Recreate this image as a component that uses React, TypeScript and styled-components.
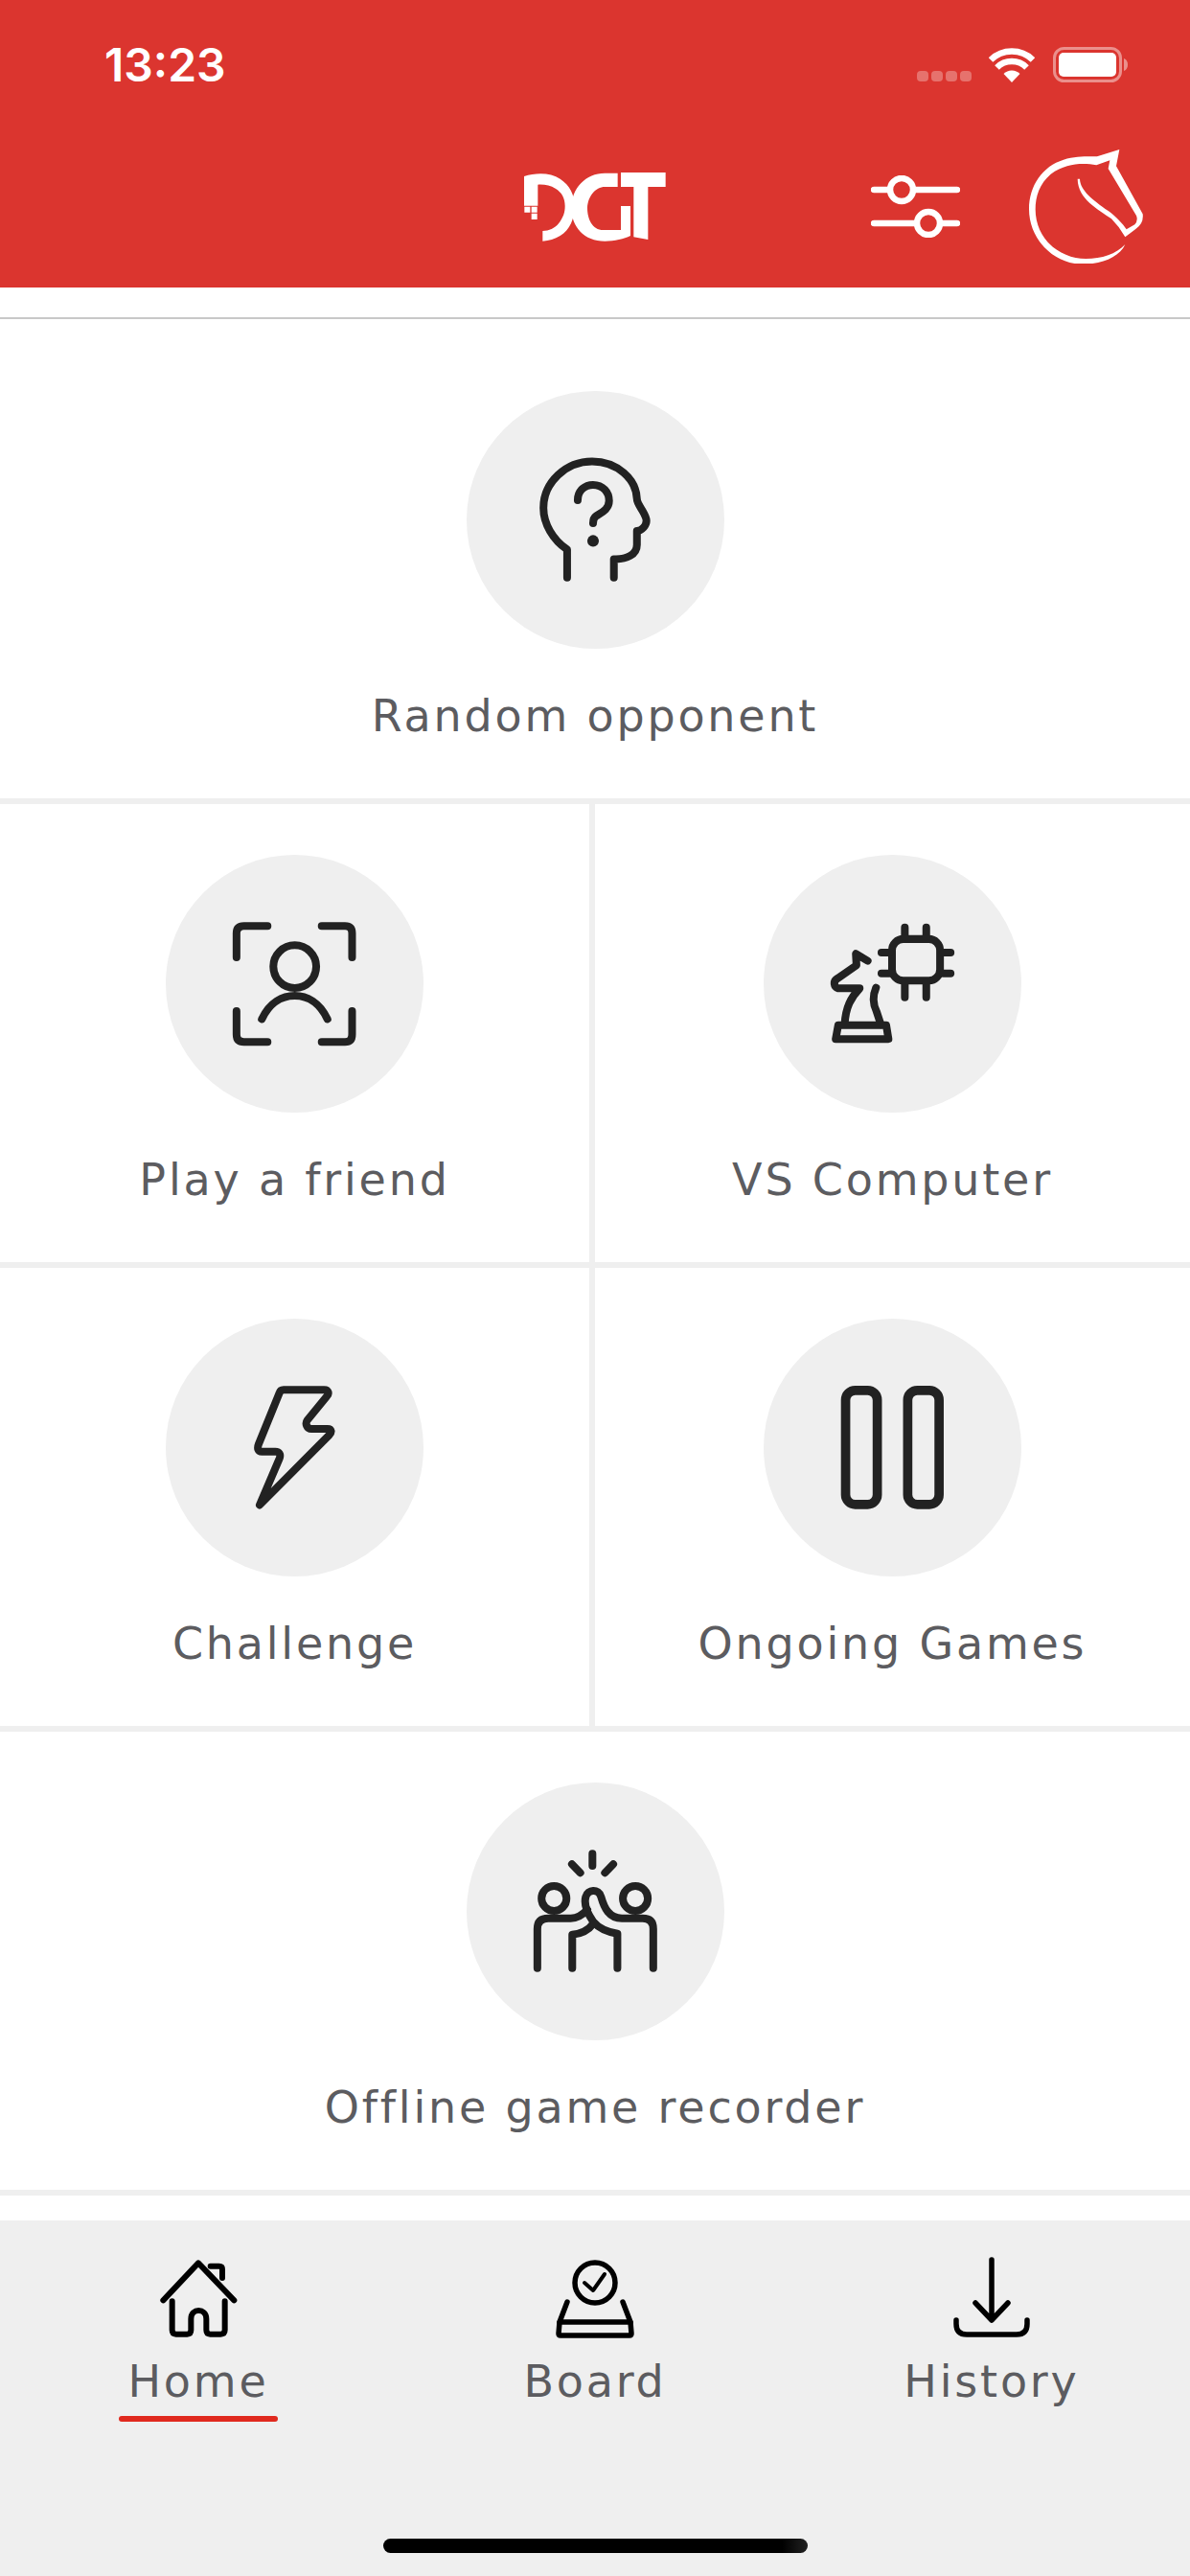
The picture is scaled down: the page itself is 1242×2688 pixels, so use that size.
import React from "react";
import styled, { createGlobalStyle } from "styled-components";

const Global = createGlobalStyle`
  html, body { margin: 0; padding: 0; background: #fff; }
  * { box-sizing: border-box; }
`;

const Page = styled.div`
  width: 1242px;
  height: 2688px;
  display: flex;
  flex-direction: column;
  background: #fff;
  overflow: hidden;
  font-family: Inter, "Liberation Sans", sans-serif;
`;

const Header = styled.header`
  height: 300px;
  flex: none;
  background: #db352f;
  display: flex;
  flex-direction: column;
`;

const StatusBar = styled.div`
  height: 156px;
  display: flex;
  justify-content: space-between;
  align-items: flex-start;
  padding: 49px 64px 0 109px;
`;

const Time = styled.span`
  color: #fff;
  font-size: 48px;
  font-weight: 600;
  line-height: 38px;
  letter-spacing: 0;
`;

const StatusIcons = styled.div`
  display: flex;
  align-items: flex-end;
`;

const SignalDots = styled.div`
  display: flex;
  gap: 3px;
  margin: 0 18px 1px 0;
`;

const SignalDot = styled.span`
  width: 12px;
  height: 11px;
  border-radius: 4px;
  background: rgba(255, 255, 255, 0.3);
`;

const Toolbar = styled.div`
  height: 119px;
  display: grid;
  grid-template-columns: 1fr auto 1fr;
  align-items: center;
  padding-right: 49px;
`;

const ToolbarEnd = styled.div`
  grid-column: 3;
  display: flex;
  justify-content: flex-end;
  align-items: center;
  gap: 72px;
`;

const LogoWrap = styled.div`
  grid-column: 2;
  display: flex;
  width: 148px;
  margin-left: 49px;
`;

const TopGap = styled.div`
  height: 31px;
  flex: none;
`;

const HeadLine = styled.div`
  height: 2px;
  flex: none;
  background: #c8c8c8;
`;

const Row = styled.div<{ $lead?: boolean }>`
  height: ${(p) => (p.$lead ? 506 : 484)}px;
  flex: none;
  border-bottom: 6px solid #efefef;
  display: grid;
  grid-template-columns: 1fr;
`;

const SplitRow = styled(Row)`
  grid-template-columns: 621px 621px;
`;

const Cell = styled.div<{ $lead?: boolean; $divided?: boolean }>`
  display: flex;
  flex-direction: column;
  align-items: center;
  padding-top: ${(p) => (p.$lead ? 75 : 53)}px;
  border-right: ${(p) => (p.$divided ? "6px solid #efefef" : "0")};
`;

const Circle = styled.div`
  width: 269px;
  height: 269px;
  flex: none;
  border-radius: 50%;
  background: #efefef;
  display: flex;
`;

const CellLabel = styled.div`
  margin-top: 42px;
  font-family: "DejaVu Sans", Inter, sans-serif;
  font-weight: 400;
  font-size: 46px;
  line-height: 56px;
  letter-spacing: 2.8px;
  color: #5c5c60;
  white-space: nowrap;
`;

const Filler = styled.div`
  flex: 1;
`;

const BottomNav = styled.nav`
  height: 371px;
  flex: none;
  background: #efefef;
  display: flex;
  flex-direction: column;
  align-items: center;
`;

const Tabs = styled.div`
  width: 100%;
  height: 332px;
  display: grid;
  grid-template-columns: repeat(3, 414px);
  padding-top: 36px;
`;

const Tab = styled.div`
  display: flex;
  flex-direction: column;
  align-items: center;
`;

const TabLabel = styled.div`
  margin-top: 14px;
  font-family: "DejaVu Sans", Inter, sans-serif;
  font-size: 46px;
  line-height: 56px;
  letter-spacing: 2.8px;
  color: #5c5c60;
`;

const TabMark = styled.div`
  width: 166px;
  height: 6px;
  margin-top: 8px;
  border-radius: 3px;
  background: #e0291e;
`;

const HomeBar = styled.div`
  width: 443px;
  height: 15px;
  border-radius: 8px;
  background: linear-gradient(90deg, #000 0%, #000 94%, #222 100%);
`;

const Sv = styled.svg`
  display: block;
  flex: none;
`;

const IconSvg: React.FC<{ vb: string; children: React.ReactNode; sw?: number }> = ({ vb, children, sw = 24 }) => (
  <Sv
    width={269}
    height={269}
    viewBox={vb}
    fill="none"
    stroke="#222"
    strokeWidth={sw}
    strokeLinecap="round"
    strokeLinejoin="round"
  >
    {children}
  </Sv>
);

const HeadIcon = () => (
  <IconSvg vb="20 25 805 805">
    <path d="M334 608V520C290 490 260 440 260 390C260 310 330 245 412 245C490 245 550 300 552 362C552 380 575 400 581 425C585 445 565 462 552 462V505C552 535 520 552 480 550V608" />
    <path d="M367 366C367 335 390 318 415 318C445 318 465 340 465 368C465 395 440 405 425 415C415 422 415 430 415 438" />
    <circle cx="415" cy="493" r="18" fill="#222" stroke="none" />
  </IconSvg>
);

const FriendIcon = () => (
  <IconSvg vb="10 5 805 805">
    <path d="M231 325V250Q231 227 254 227H328" />
    <path d="M497 227H570Q592 227 592 250V325" />
    <path d="M231 493V565Q231 589 254 589H328" />
    <path d="M497 589H570Q592 589 592 565V493" />
    <circle cx="413" cy="354" r="67" />
    <path d="M310 518C335 465 375 445 413 445C450 445 490 465 515 518" />
  </IconSvg>
);

const ComputerIcon = () => (
  <IconSvg vb="22 5 805 805">
    <rect x="423" y="268" width="150" height="130" rx="35" />
    <path d="M463 232V260M530 232V260M463 405V450M530 405V450M390 310H415M390 375H415M582 310H606M582 375H606" />
    <path d="M347 336L310 314L312 350L250 393C240 400 240 418 255 422L322 422C295 450 278 480 275 535" />
    <path d="M373 420C360 450 365 475 375 495L388 535" />
    <path d="M255 537H405L412 580H247Z" />
  </IconSvg>
);

const BoltIcon = () => (
  <IconSvg vb="10 18 805 805">
    <path d="M378 240H505C518 240 522 252 512 262L452 335C445 345 450 362 465 362H515C528 362 530 372 520 382L303 600L365 455C370 442 365 433 352 433H310C298 433 295 423 300 410L365 250C367 243 370 240 378 240Z" />
  </IconSvg>
);

const PauseIcon = () => (
  <IconSvg vb="22 18 805 805" sw={29}>
    <rect x="278" y="242" width="99" height="356" rx="30" />
    <rect x="472" y="242" width="98" height="356" rx="30" />
  </IconSvg>
);

const HighFiveIcon = () => (
  <IconSvg vb="20 28 805 805">
    <path d="M413 250V288M349 283L375 310M478 283L452 310" />
    <circle cx="293" cy="390" r="39" />
    <circle cx="547" cy="390" r="39" />
    <path d="M241 608V485Q241 452 275 452H345C365 452 382 442 397 425" />
    <path d="M350 608V503C378 500 400 490 416 468" />
    <path d="M491 608V500C460 495 430 480 415 462C400 440 385 410 392 385C398 362 432 358 440 385C450 420 465 452 505 452H570Q603 452 603 485V608" />
  </IconSvg>
);

const TabSvg: React.FC<{ vb?: string; sw?: number; children: React.ReactNode }> = ({ vb = "0 0 100 90", sw = 5.5, children }) => (
  <Sv width={100} height={90} viewBox={vb} fill="none" stroke="#000" strokeWidth={sw} strokeLinecap="round" strokeLinejoin="round">
    {children}
  </Sv>
);

const HomeIcon = () => (
  <TabSvg vb="170 40 300 270" sw={18}>
    <path d="M210 182L320 65L432 182" />
    <path d="M358 75H385Q395 75 395 85V112" />
    <path d="M238 185V275Q238 288 250 288H285Q297 288 297 275V240C297 205 345 205 345 240V275Q345 288 357 288H390Q403 288 403 275V185" />
  </TabSvg>
);

const BoardIcon = () => (
  <TabSvg>
    <circle cx="50" cy="29" r="21" />
    <path d="M39 29L48 37L60 20" strokeWidth={4} />
    <path d="M21 49L13 70M79 49L87 70" />
    <path d="M13 70H87L88 82Q88 84 86 84H14Q12 84 12 82Z" />
  </TabSvg>
);

const HistoryIcon = () => (
  <TabSvg>
    <path d="M50 5V68M33 50L50 68L67 50" />
    <path d="M13 68V72Q13 83 24 83H76Q87 83 87 72V68" />
  </TabSvg>
);

const Dgt = () => (
  <Sv width={148} height={72} viewBox="82 60 444 216" fill="#fff">
    <path d="M82 72C120 60 165 60 195 80C225 100 240 130 240 165C240 205 225 240 195 258C178 268 160 274 140 275V243C160 243 178 235 190 220C205 200 210 185 210 165C210 140 200 122 180 110C165 100 145 97 125 98V164H82Z" />
    <path d="M375 62V105H335C305 105 282 135 280 170C280 205 295 240 330 240H385V165H415V258C395 268 365 275 335 275C270 275 230 230 230 170C230 110 275 62 335 62Z" />
    <path d="M385 60H525V105H470V270L425 262V105H385Z" />
    <path d="M83 167H101V185H83ZM105 167H123V185H105ZM105 188H123V207H105Z" />
  </Sv>
);

const Sliders = () => (
  <Sv width={93} height={65} viewBox="0 0 93 65" fill="none" stroke="#fff" strokeWidth={6.5} strokeLinecap="round">
    <path d="M3 15H17M47 15H90M3 50H45M75 50H90" />
    <circle cx="32" cy="15" r="12" />
    <circle cx="60" cy="50" r="12" />
  </Sv>
);

const Horse = () => (
  <Sv width={119} height={119} viewBox="72 48 357 357" fill="#fff">
    <path d="M355 48L345 100L428 250Q432 280 405 298L373 322Q355 290 330 265C290 235 225 205 224 140L231 140C232 175 270 205 320 240C345 258 365 280 377 298L403 283Q414 270 408 255L320 108L325 82L283 97C240 90 190 90 140 125C105 155 92 195 92 235C92 330 170 390 250 390C300 390 345 375 373 345C355 385 300 407 240 407C150 407 72 330 72 235C72 160 115 100 180 80C220 68 260 70 285 70Z" />
  </Sv>
);

const WifiSvg = styled(Sv)`
  margin-right: 19px;
`;

const Wifi = () => (
  <WifiSvg width={48} height={36} viewBox="0 0 48 36" fill="none" stroke="#fff" strokeWidth={6.5}>
    <path d="M24 36L15.5 27A12 12 0 0 1 32.5 27Z" fill="#fff" stroke="none" />
    <path d="M8.5 20.5A22 22 0 0 1 39.5 20.5" />
    <path d="M2 12.5A31.5 31.5 0 0 1 46 12.5" />
  </WifiSvg>
);

const Battery = () => (
  <Sv width={79} height={37} viewBox="0 0 79 37" fill="none">
    <rect x="1.5" y="1.5" width="69" height="34" rx="10" stroke="#fff" strokeOpacity="0.45" strokeWidth="3" />
    <rect x="6" y="6" width="60" height="25" rx="5" fill="#fff" />
    <path d="M74 12C77 13 78 16 78 18.500C78 21 77 24 74 25Z" fill="#fff" fillOpacity="0.45" />
  </Sv>
);

export default function App() {
  return (
    <Page>
      <Global />
      <Header>
        <StatusBar>
          <Time>13:23</Time>
          <StatusIcons>
            <SignalDots>
              <SignalDot />
              <SignalDot />
              <SignalDot />
              <SignalDot />
            </SignalDots>
            <Wifi />
            <Battery />
          </StatusIcons>
        </StatusBar>
        <Toolbar>
          <LogoWrap>
            <Dgt />
          </LogoWrap>
          <ToolbarEnd>
            <Sliders />
            <Horse />
          </ToolbarEnd>
        </Toolbar>
      </Header>
      <TopGap />
      <HeadLine />
      <Row $lead>
        <Cell $lead>
          <Circle>
            <HeadIcon />
          </Circle>
          <CellLabel>Random opponent</CellLabel>
        </Cell>
      </Row>
      <SplitRow>
        <Cell $divided>
          <Circle>
            <FriendIcon />
          </Circle>
          <CellLabel>Play a friend</CellLabel>
        </Cell>
        <Cell>
          <Circle>
            <ComputerIcon />
          </Circle>
          <CellLabel>VS Computer</CellLabel>
        </Cell>
      </SplitRow>
      <SplitRow>
        <Cell $divided>
          <Circle>
            <BoltIcon />
          </Circle>
          <CellLabel>Challenge</CellLabel>
        </Cell>
        <Cell>
          <Circle>
            <PauseIcon />
          </Circle>
          <CellLabel>Ongoing Games</CellLabel>
        </Cell>
      </SplitRow>
      <Row>
        <Cell>
          <Circle>
            <HighFiveIcon />
          </Circle>
          <CellLabel>Offline game recorder</CellLabel>
        </Cell>
      </Row>
      <Filler />
      <BottomNav>
        <Tabs>
          <Tab>
            <HomeIcon />
            <TabLabel>Home</TabLabel>
            <TabMark />
          </Tab>
          <Tab>
            <BoardIcon />
            <TabLabel>Board</TabLabel>
          </Tab>
          <Tab>
            <HistoryIcon />
            <TabLabel>History</TabLabel>
          </Tab>
        </Tabs>
        <HomeBar />
      </BottomNav>
    </Page>
  );
}
